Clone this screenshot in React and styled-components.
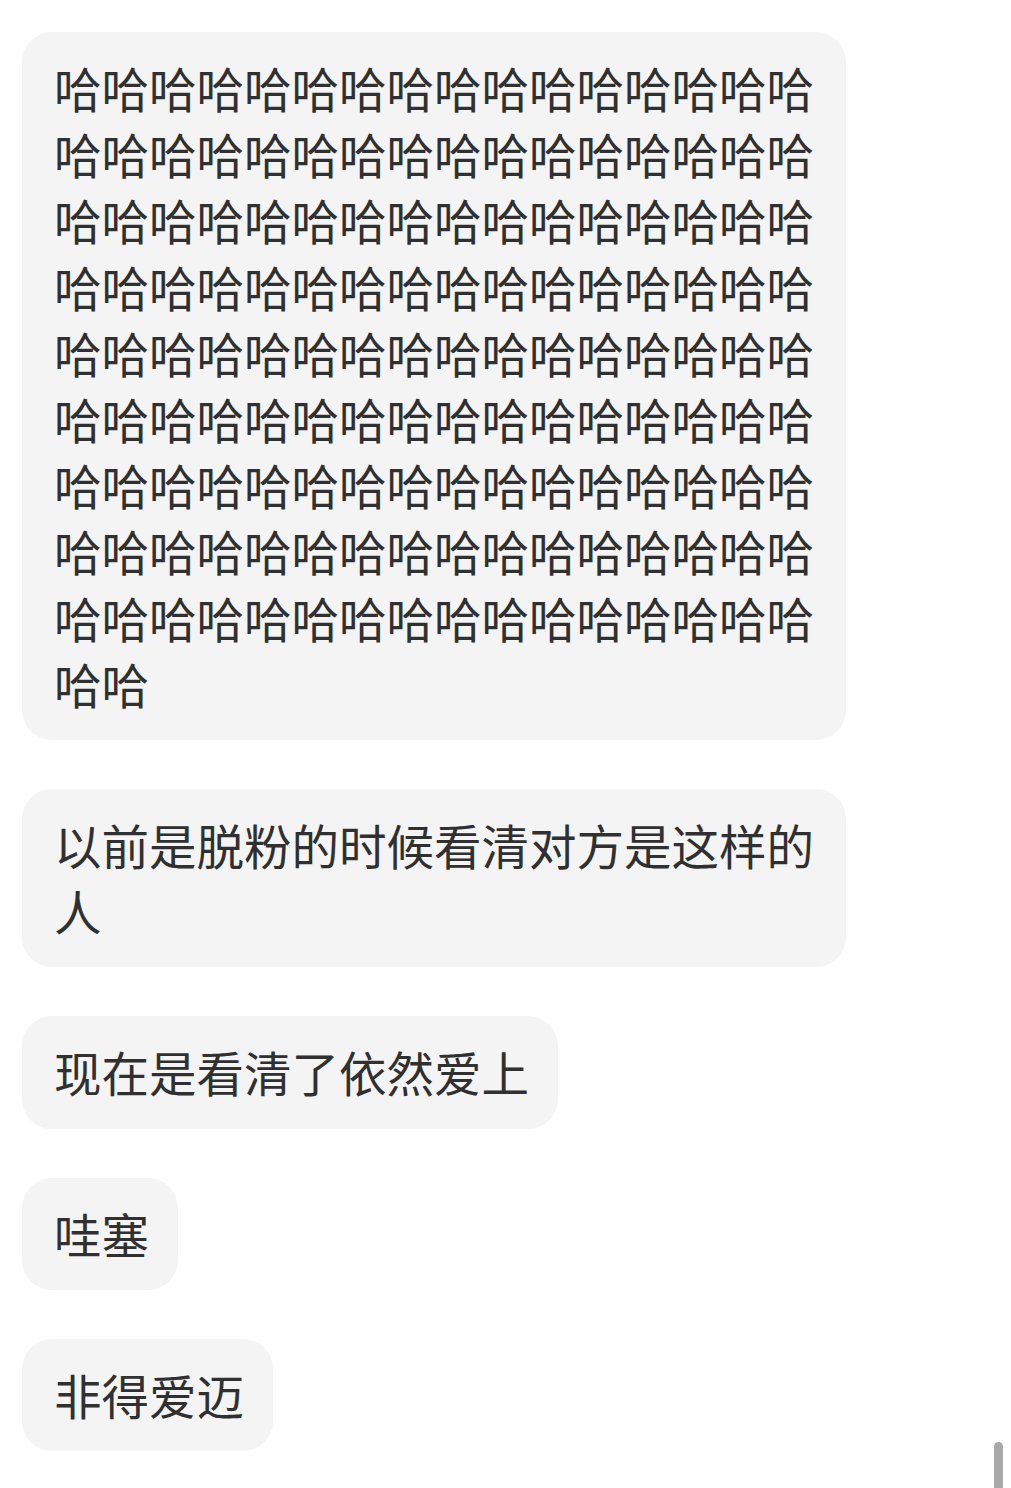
import React from "react";
import styled, { createGlobalStyle } from "styled-components";

const Global = createGlobalStyle`
  html, body { margin: 0; padding: 0; background: #ffffff; }
  body { font-family: "Noto Sans CJK SC", "Noto Sans", sans-serif; }
`;

const Page = styled.div`
  position: relative;
  width: 1011px;
  height: 1488px;
  overflow: hidden;
  box-sizing: border-box;
  padding: 32px 0 0 22px;
  display: flex;
  flex-direction: column;
  align-items: flex-start;
  gap: 49px;
`;

const Bubble = styled.div`
  box-sizing: border-box;
  max-width: 824px;
  padding: 23px 29px 23px 32px;
  background: #f4f4f4;
  border-radius: 30px;
  color: #303030;
  font-family: "Noto Sans CJK SC", sans-serif;
  font-size: 47.5px;
  line-height: 66.2px;
  word-break: break-all;
`;

const Scrollbar = styled.div`
  position: absolute;
  right: 8px;
  top: 1442px;
  width: 9px;
  height: 60px;
  border-radius: 5px;
  background: #a9a9a9;
`;

const messages = [
  "哈".repeat(146),
  "以前是脱粉的时候看清对方是这样的人",
  "现在是看清了依然爱上",
  "哇塞",
  "非得爱迈",
];

export default function App() {
  return (
    <>
      <Global />
      <Page>
        {messages.map((m, i) => (
          <Bubble key={i}>{m}</Bubble>
        ))}
        <Scrollbar />
      </Page>
    </>
  );
}
